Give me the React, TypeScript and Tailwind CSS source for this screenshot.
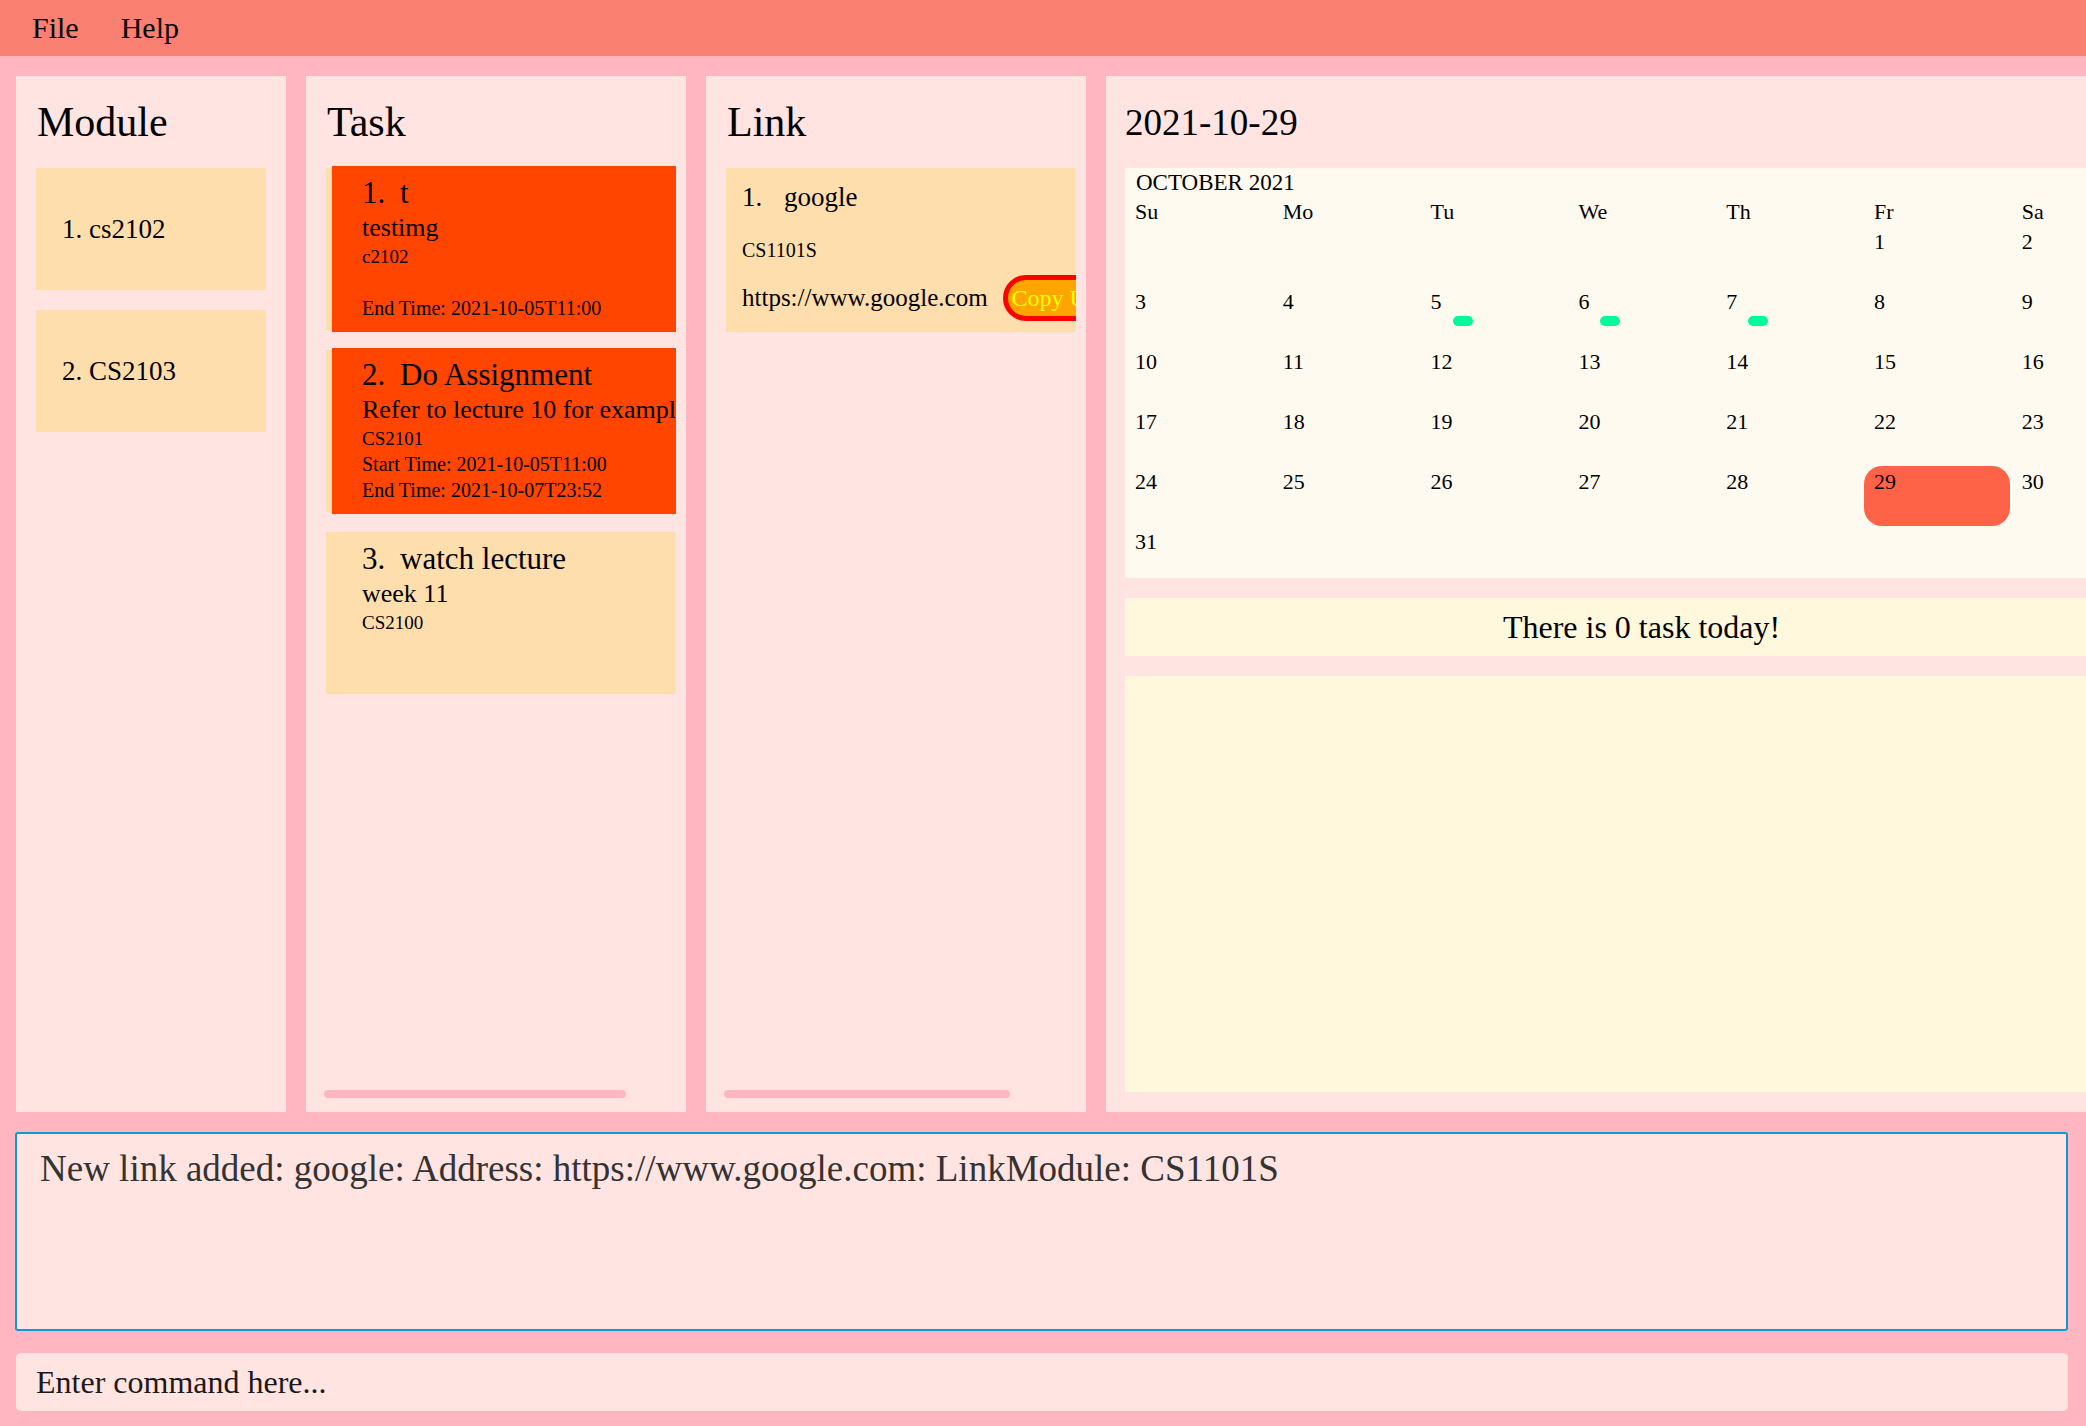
import React from "react"

const serif = "font-['Liberation_Serif',serif]"

type Task = {
  index: number
  title: string
  desc: string
  module: string
  start?: string
  end?: string
  urgent: boolean
}

const tasks: Task[] = [
  { index: 1, title: "t", desc: "testimg", module: "c2102", end: "2021-10-05T11:00", urgent: true },
  {
    index: 2,
    title: "Do Assignment",
    desc: "Refer to lecture 10 for examples",
    module: "CS2101",
    start: "2021-10-05T11:00",
    end: "2021-10-07T23:52",
    urgent: true,
  },
  { index: 3, title: "watch lecture", desc: "week 11", module: "CS2100", urgent: false },
]

function PanelTitle({ children }: { children: React.ReactNode }) {
  return <div className="text-[42px] leading-[48px] text-black whitespace-nowrap">{children}</div>
}

function TaskBody({ task }: { task: Task }) {
  return (
    <div className="pt-[9px] pl-[30px] whitespace-nowrap text-black">
      <div className="flex items-baseline text-[31px] leading-[36px]">
        <span className="w-[38px]">{task.index}.</span>
        <span>{task.title}</span>
      </div>
      <div className="text-[26px] leading-[33px]">{task.desc}</div>
      <div className="text-[19px] leading-[25px]">{task.module}</div>
      {(task.start || task.end) && (
        <>
          <div className="text-[20px] leading-[26px]">{task.start ? `Start Time: ${task.start}` : "\u00a0"}</div>
          <div className="text-[20px] leading-[26px]">End Time: {task.end}</div>
        </>
      )}
    </div>
  )
}

function TaskCard({ task }: { task: Task }) {
  return (
    <div className="h-[162px] bg-[#FFDEAD]">
      {task.urgent ? (
        <div className="ml-[6px] -mt-[2px] h-[166px] bg-[#FF4500] overflow-hidden">
          <TaskBody task={task} />
        </div>
      ) : (
        <div className="ml-[6px] h-[162px] overflow-hidden">
          <TaskBody task={task} />
        </div>
      )}
    </div>
  )
}

const dayNames = ["Su", "Mo", "Tu", "We", "Th", "Fr", "Sa"]
const taskDays = [5, 6, 7]

function Calendar() {
  const cells: (number | null)[] = [null, null, null, null, null]
  for (let d = 1; d <= 31; d++) cells.push(d)
  return (
    <div className="ml-[19px] mt-[20px] h-[410px] w-[1033px] bg-[#FFFAF0] overflow-hidden pt-[1px] text-black">
      <div className="pl-[11px] text-[23px] leading-[28px]">OCTOBER 2021</div>
      <div className="grid grid-cols-[repeat(7,147.8px)]">
        {dayNames.map((d) => (
          <div key={d} className="pl-[10px] text-[22px] leading-[29px]">
            {d}
          </div>
        ))}
      </div>
      <div className="grid grid-cols-[repeat(7,147.8px)]">
        {cells.map((d, i) => (
          <div
            key={i}
            className={
              d === 29
                ? "h-[60px] w-[146px] rounded-[18px] bg-[#FF6347] pl-[10px] pt-[3px] text-[22px] leading-[25px]"
                : "h-[60px] pl-[10px] pt-[3px] text-[22px] leading-[25px]"
            }
          >
            {d ?? ""}
            {d !== null && taskDays.includes(d) && (
              <div className="ml-[22px] mt-[2px] h-[10px] w-[20px] rounded-full bg-[#00FA9A]" />
            )}
          </div>
        ))}
      </div>
    </div>
  )
}

export default function App() {
  return (
    <div className={`${serif} w-[2086px] h-[1426px] overflow-hidden bg-[#FFB6C1] flex flex-col`}>
      <div className="h-[56px] shrink-0 bg-[#FA8072] flex text-[30px] leading-[56px] text-black">
        <span className="ml-[32px]">File</span>
        <span className="ml-[42px]">Help</span>
      </div>

      <div className="mt-[20px] h-[1036px] shrink-0 flex gap-[20px] pl-[16px]">
        <div className="w-[270px] shrink-0 bg-[#FFE4E1] pt-[22px]">
          <div className="pl-[21px]">
            <PanelTitle>Module</PanelTitle>
          </div>
          <div className="mt-[22px] mx-[20px] flex flex-col gap-[20px]">
            {["1. cs2102", "2. CS2103"].map((m) => (
              <div key={m} className="h-[122px] bg-[#FFDEAD] flex items-center pl-[26px] text-[27px] text-black">
                {m}
              </div>
            ))}
          </div>
        </div>

        <div className="w-[380px] shrink-0 bg-[#FFE4E1] pt-[22px] flex flex-col">
          <div className="pl-[21px]">
            <PanelTitle>Task</PanelTitle>
          </div>
          <div className="mt-[22px] ml-[20px] mr-[10px] flex flex-col gap-[20px]">
            {tasks.map((t) => (
              <TaskCard key={t.index} task={t} />
            ))}
          </div>
          <div className="flex-1" />
          <div className="ml-[18px] mb-[14px] h-[8px] w-[302px] rounded-full bg-[#FFB6C1]" />
        </div>

        <div className="w-[380px] shrink-0 bg-[#FFE4E1] pt-[22px] flex flex-col">
          <div className="pl-[21px]">
            <PanelTitle>Link</PanelTitle>
          </div>
          <div className="mt-[22px] ml-[20px] mr-[10px] h-[164px] bg-[#FFDEAD] overflow-hidden pl-[16px] pt-[12px] text-black whitespace-nowrap">
            <div className="flex text-[27px] leading-[34px]">
              <span className="w-[42px]">1.</span>
              <span>google</span>
            </div>
            <div className="mt-[23px] text-[20px] leading-[26px]">CS1101S</div>
            <div className="mt-[12px] flex items-center h-[46px]">
              <span className="text-[25px]">https://www.google.com</span>
              <button className="ml-[15px] h-[46px] shrink-0 rounded-full border-[5px] border-[#FF0000] bg-[#FFA500] pl-[4px] pr-[12px] text-[24px] leading-[34px] text-[#FFFF00]">
                Copy URL
              </button>
            </div>
          </div>
          <div className="flex-1" />
          <div className="ml-[18px] mb-[14px] h-[8px] w-[286px] rounded-full bg-[#FFB6C1]" />
        </div>

        <div className="w-[1080px] shrink-0 bg-[#FFE4E1] pt-[22px] flex flex-col">
          <div className="pl-[19px] text-[37px] leading-[50px] text-black">2021-10-29</div>
          <Calendar />
          <div className="ml-[19px] mt-[20px] h-[58px] w-[1033px] bg-[#FFF8DC] flex items-center justify-center text-[32px] text-black">
            There is 0 task today!
          </div>
          <div className="ml-[19px] mt-[20px] h-[416px] w-[1033px] bg-[#FFF8DC]" />
        </div>
      </div>

      <div className="mt-[20px] ml-[15px] mr-[18px] h-[199px] shrink-0 rounded-[3px] border-2 border-[#0A9BD3] bg-[#FFE4E1] pl-[23px] pt-[7px] text-[37px] text-[#333333] whitespace-nowrap">
        New link added: google: Address: https://www.google.com: LinkModule: CS1101S
      </div>

      <div className="mt-[22px] ml-[16px] mr-[18px] h-[58px] shrink-0 rounded-[5px] bg-[#FFE4E1] flex items-center pl-[20px] text-[32px] text-[#1a1a1a]">
        Enter command here...
      </div>
    </div>
  )
}
